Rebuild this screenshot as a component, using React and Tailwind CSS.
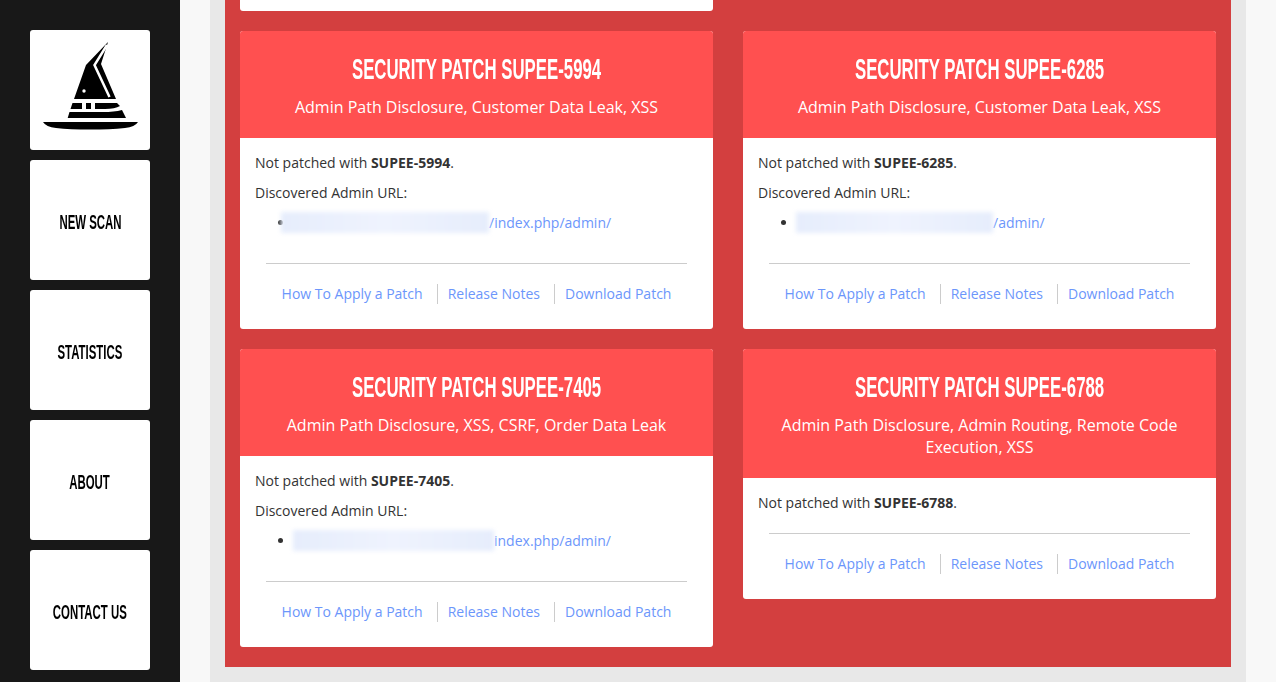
import React from 'react';

const navItems = ['New Scan', 'Statistics', 'About', 'Contact Us'];

const patches = [
  {
    id: 'SUPEE-5994',
    issues: 'Admin Path Disclosure, Customer Data Leak, XSS',
    path: '/index.php/admin/',
    blur: 'w-[194px]',
    hideBullet: true,
  },
  {
    id: 'SUPEE-6285',
    issues: 'Admin Path Disclosure, Customer Data Leak, XSS',
    path: '/admin/',
    blur: 'w-[195px]',
  },
  {
    id: 'SUPEE-7405',
    issues: 'Admin Path Disclosure, XSS, CSRF, Order Data Leak',
    path: 'index.php/admin/',
    blur: 'w-[199px]',
  },
  {
    id: 'SUPEE-6788',
    issues: 'Admin Path Disclosure, Admin Routing, Remote Code Execution, XSS',
  },
];

// no condensed face is installed, so the bold sans gets squeezed horizontally
const headingFont = "font-['Liberation_Sans',sans-serif] font-bold uppercase whitespace-nowrap";

const WizardHat = () => (
  <svg viewBox="0 0 120 120" className="w-[120px] h-[120px]">
    <path d="M78 12 L56 35 L44 69 L86 69 L71 34 Z" fill="#000" />
    <path d="M77 15 L64.500 35 L79.500 67" fill="none" stroke="#fff" strokeWidth="2.500" />
    <circle cx="54" cy="61" r="1.700" fill="#fff" />
    <path d="M42.500 73 H52 V79 H40.500 Z M56 73 H61 V79 H56 Z M65 73 H87 L90 76 Q85 79 75 79 H65 Z" fill="#000" />
    <path d="M39.500 82 H73 Q84 82 92 80 L96 88 H37.700 Z" fill="#000" />
    <path d="M13 92 H108 Q105 97 95 98 Q80 99.500 60 99.500 Q40 99.500 26 98 Q16 97 13 92 Z" fill="#000" />
  </svg>
);

const Sidebar = () => (
  <aside className="w-[180px] shrink-0 bg-[#181818] flex flex-col items-center gap-[10px] pt-[30px]">
    <div className="w-[120px] h-[120px] bg-white rounded-[3px]">
      <WizardHat />
    </div>
    {navItems.map((item) => (
      <a
        key={item}
        className="w-[120px] h-[120px] pt-1 bg-white rounded-[3px] flex items-center justify-center text-black text-[20px]"
      >
        <span className={`${headingFont} inline-block scale-x-[0.57]`}>{item}</span>
      </a>
    ))}
  </aside>
);

const PatchLinks = () => (
  <ul className="flex justify-center text-[#6c96fb]">
    <li className="pr-[14px]">How To Apply a Patch</li>
    <li className="pl-[10px] pr-[14px] border-l border-[#ccc]">Release Notes</li>
    <li className="pl-[10px] border-l border-[#ccc]">Download Patch</li>
  </ul>
);

const PatchCard = ({ patch }) => (
  <div className="bg-white rounded-[3px] overflow-hidden">
    <div className="bg-[#ff5050] text-white text-center px-[15px] pt-[20px] pb-[20px]">
      <h3 className="flex justify-center text-[30px] leading-[36px]">
        <span className={`${headingFont} inline-block scale-x-[0.56]`}>Security Patch {patch.id}</span>
      </h3>
      <p className="text-[16px] leading-[22px] mt-[9px]">{patch.issues}</p>
    </div>
    <div className="p-[15px] pb-[25px]">
      <p className="mb-[10px]">
        Not patched with <strong>{patch.id}</strong>.
      </p>
      {patch.path && (
        <>
          <p className="mb-[10px]">Discovered Admin URL:</p>
          <ul className="list-disc pl-10 mb-[30px]">
            <li className="text-[#6c96fb] marker:text-[#333]">
              <span className={`relative inline-block h-5 align-top ${patch.blur}`}>
                <span
                  className={`absolute -top-px bottom-0 right-0 bg-gradient-to-r from-[#e6edfc] via-[#eff3fe] to-[#e6edfc] blur-[2px] ${
                    patch.hideBullet ? '-left-[14px]' : '-left-0.5'
                  }`}
                />
              </span>
              {patch.path}
            </li>
          </ul>
        </>
      )}
      {!patch.path && <div className="h-[10px]" />}
      <hr className="border-[#ccc] mx-[11px] mb-5" />
      <PatchLinks />
    </div>
  </div>
);

export default function App() {
  return (
    <div className="h-[682px] overflow-hidden flex bg-[#f8f8f8] text-[14px] leading-5 text-[#333] font-['Open_Sans',sans-serif]">
      <Sidebar />
      <main className="w-[1036px] ml-[30px] bg-[#e8e8e8] px-[15px] h-full">
        <div className="bg-[#d33f3f] px-[15px] pb-5 grid grid-cols-2 gap-x-[30px] gap-y-5 items-start">
          <div className="h-[11px] bg-white rounded-b-[3px] col-span-1" />
          <div />
          {patches.map((patch) => (
            <PatchCard key={patch.id} patch={patch} />
          ))}
        </div>
      </main>
    </div>
  );
}
